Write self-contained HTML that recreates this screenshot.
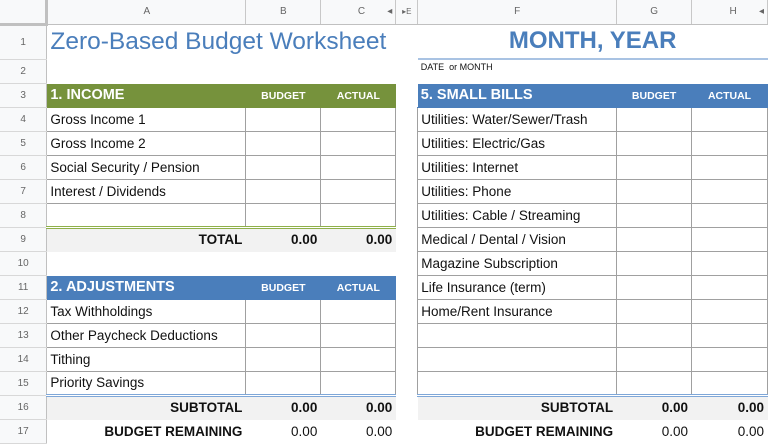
<!DOCTYPE html>
<html><head><meta charset="utf-8"><style>
*{margin:0;padding:0;box-sizing:border-box}
body{width:768px;height:439px;overflow:hidden;background:#fff;font-family:"Liberation Sans",sans-serif;color:#111;position:relative}
table{border-collapse:collapse;table-layout:fixed;position:absolute;left:0;top:0}
td{border-right:1px solid #e2e3e3;border-bottom:1px solid #e2e3e3;height:24px;font-size:13.5px;white-space:nowrap;overflow:hidden;padding:0 3px;vertical-align:middle}
tr.ch td{background:#f8f9fa;color:#666;font-size:10px;text-align:center;border-right:1px solid #c8c8c8;border-bottom:1px solid #c0c0c0}
td.rh{background:#f8f9fa;color:#666;font-size:10px;text-align:center;border-right:1px solid #c0c0c0;border-bottom:1px solid #d8d8d8}
td.gap{border-right:none;border-bottom:none}
.g{background:#76923c;color:#fff;font-weight:bold;font-size:14.5px;border-color:#76923c}
.b{background:#4a7ebb;color:#fff;font-weight:bold;font-size:14.5px;border-color:#4a7ebb}
.hd{font-size:10.5px;text-align:center;padding-top:2px}
.bx{border:1px solid #a0a0a0}
.tot{background:#f2f2f2;font-weight:bold;text-align:right;border-color:#f2f2f2}
.rem{text-align:right;border-color:#fff}
.rb{font-weight:bold}
.gl{border-top:3px double #8fb04a}
.bl{border-top:3px double #7fa7d8}
.nb{border-color:#fff}
</style></head><body>
<table>
<colgroup><col style="width:47px"><col style="width:199px"><col style="width:75px"><col style="width:75px"><col style="width:22px"><col style="width:199px"><col style="width:75px"><col style="width:76px"></colgroup>
<tr class="ch"><td style="border-right:3px solid #c0c0c0;border-bottom:3px solid #c0c0c0"></td><td>A</td><td>B</td><td style="text-align:right">C&nbsp;&nbsp;&nbsp;&nbsp;&nbsp;&nbsp;&nbsp;&nbsp;◂</td><td style="font-size:8px">▸E</td><td>F</td><td>G</td><td style="text-align:right">H&nbsp;&nbsp;&nbsp;&nbsp;&nbsp;&nbsp;&nbsp;&nbsp;◂</td></tr>
<tr style="height:35px"><td class="rh" style="height:35px">1</td><td colspan="3" class="nb" style="font-size:24.5px;color:#4a7ebb;padding-left:3px">Zero-Based Budget Worksheet</td><td class="gap"></td><td colspan="3" style="font-size:24px;color:#4a7ebb;font-weight:bold;text-align:center;border-bottom:2px solid #a9c3e3;border-right:none">MONTH, YEAR</td></tr>
<tr><td class="rh">2</td><td class="nb"></td><td class="nb"></td><td class="nb"></td><td class="gap"></td><td class="nb" style="font-size:9px;vertical-align:top;padding-top:2px">DATE&nbsp; or MONTH</td><td class="nb"></td><td class="nb"></td></tr>
<tr><td class="rh">3</td><td class="g">1. INCOME</td><td class="g hd">BUDGET</td><td class="g hd">ACTUAL</td><td class="gap"></td><td class="b">5. SMALL BILLS</td><td class="b hd">BUDGET</td><td class="b hd">ACTUAL</td></tr>
<tr><td class="rh">4</td><td class="bx">Gross Income 1</td><td class="bx"></td><td class="bx"></td><td class="gap"></td><td class="bx">Utilities: Water/Sewer/Trash</td><td class="bx"></td><td class="bx"></td></tr>
<tr><td class="rh">5</td><td class="bx">Gross Income 2</td><td class="bx"></td><td class="bx"></td><td class="gap"></td><td class="bx">Utilities: Electric/Gas</td><td class="bx"></td><td class="bx"></td></tr>
<tr><td class="rh">6</td><td class="bx">Social Security / Pension</td><td class="bx"></td><td class="bx"></td><td class="gap"></td><td class="bx">Utilities: Internet</td><td class="bx"></td><td class="bx"></td></tr>
<tr><td class="rh">7</td><td class="bx">Interest / Dividends</td><td class="bx"></td><td class="bx"></td><td class="gap"></td><td class="bx">Utilities: Phone</td><td class="bx"></td><td class="bx"></td></tr>
<tr><td class="rh">8</td><td class="bx"></td><td class="bx"></td><td class="bx"></td><td class="gap"></td><td class="bx">Utilities: Cable / Streaming</td><td class="bx"></td><td class="bx"></td></tr>
<tr><td class="rh">9</td><td class="tot gl">TOTAL</td><td class="tot gl">0.00</td><td class="tot gl">0.00</td><td class="gap"></td><td class="bx">Medical / Dental / Vision</td><td class="bx"></td><td class="bx"></td></tr>
<tr><td class="rh">10</td><td class="nb"></td><td class="nb"></td><td class="nb"></td><td class="gap"></td><td class="bx">Magazine Subscription</td><td class="bx"></td><td class="bx"></td></tr>
<tr><td class="rh">11</td><td class="b">2. ADJUSTMENTS</td><td class="b hd">BUDGET</td><td class="b hd">ACTUAL</td><td class="gap"></td><td class="bx">Life Insurance (term)</td><td class="bx"></td><td class="bx"></td></tr>
<tr><td class="rh">12</td><td class="bx">Tax Withholdings</td><td class="bx"></td><td class="bx"></td><td class="gap"></td><td class="bx">Home/Rent Insurance</td><td class="bx"></td><td class="bx"></td></tr>
<tr><td class="rh">13</td><td class="bx">Other Paycheck Deductions</td><td class="bx"></td><td class="bx"></td><td class="gap"></td><td class="bx"></td><td class="bx"></td><td class="bx"></td></tr>
<tr><td class="rh">14</td><td class="bx">Tithing</td><td class="bx"></td><td class="bx"></td><td class="gap"></td><td class="bx"></td><td class="bx"></td><td class="bx"></td></tr>
<tr><td class="rh">15</td><td class="bx">Priority Savings</td><td class="bx"></td><td class="bx"></td><td class="gap"></td><td class="bx"></td><td class="bx"></td><td class="bx"></td></tr>
<tr><td class="rh">16</td><td class="tot bl">SUBTOTAL</td><td class="tot bl">0.00</td><td class="tot bl">0.00</td><td class="gap"></td><td class="tot bl">SUBTOTAL</td><td class="tot bl">0.00</td><td class="tot bl">0.00</td></tr>
<tr><td class="rh">17</td><td class="rem rb">BUDGET REMAINING</td><td class="rem">0.00</td><td class="rem">0.00</td><td class="gap"></td><td class="rem rb">BUDGET REMAINING</td><td class="rem">0.00</td><td class="rem">0.00</td></tr>
</table>
</body></html>
